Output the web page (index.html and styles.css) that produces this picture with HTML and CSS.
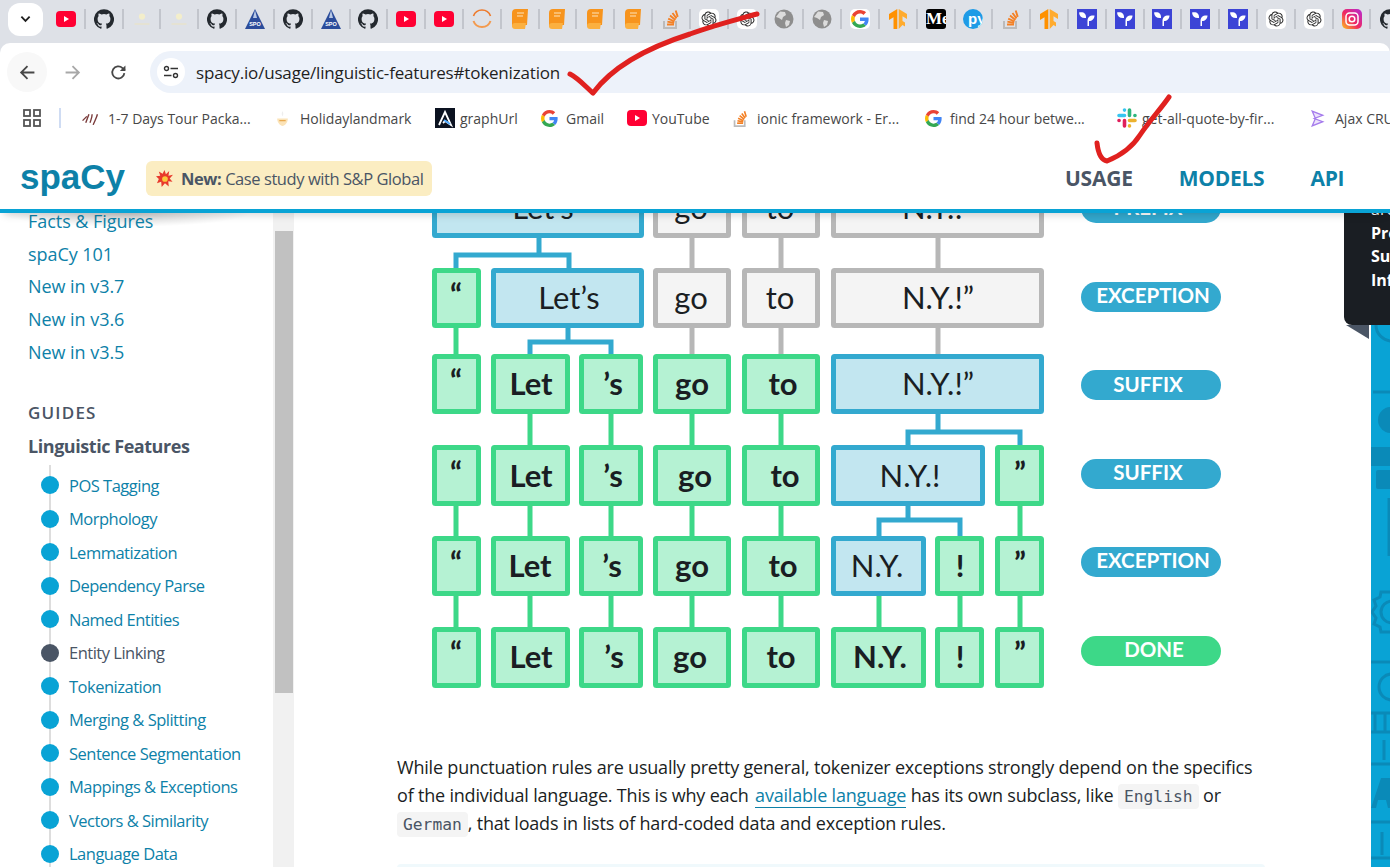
FILE: index.html
```html
<!DOCTYPE html>
<html lang="en">
<head>
    <meta charset="UTF-8">
    <meta name="viewport" content="width=device-width, initial-scale=1.0">
    <title>Linguistic Features - spaCy</title>
    <link rel="stylesheet" href="styles.css">
</head>
<body>
    <!-- icon sprite -->
    <svg class="sprite" aria-hidden="true">
        <defs>
            <linearGradient id="ig-grad" x1="0" y1="1" x2="1" y2="0">
                <stop offset="0" stop-color="#fdc21c"/>
                <stop offset=".45" stop-color="#f0285f"/>
                <stop offset="1" stop-color="#b52bd6"/>
            </linearGradient>
        </defs>
        <symbol id="yt" viewBox="0 0 20 16"><rect width="20" height="16" rx="4" fill="#ff0033"/><path d="M8 5l5 3-5 3z" fill="#fff"/></symbol>
        <symbol id="gh" viewBox="0 0 24 24"><path fill="#24292f" d="M12 .3a12 12 0 0 0-3.8 23.4c.6.1.8-.3.8-.6v-2c-3.3.7-4-1.6-4-1.6-.6-1.4-1.4-1.8-1.4-1.8-1-.7.1-.7.1-.7 1.2.1 1.8 1.2 1.8 1.2 1 1.8 2.8 1.3 3.5 1 .1-.8.4-1.3.8-1.6-2.7-.3-5.5-1.3-5.5-6 0-1.2.5-2.3 1.3-3.1-.2-.4-.6-1.6 0-3.2 0 0 1-.3 3.4 1.2a11.5 11.5 0 0 1 6 0c2.3-1.5 3.3-1.2 3.3-1.2.6 1.6.2 2.8.1 3.2.8.8 1.3 1.9 1.3 3.1 0 4.7-2.8 5.7-5.5 6 .4.4.8 1.1.8 2.2v3.3c0 .3.2.7.8.6A12 12 0 0 0 12 .3z"/></symbol>
        <symbol id="dim" viewBox="0 0 16 16"><circle cx="8" cy="6" r="2.5" fill="#f3eecb"/><path d="M2 12h12" stroke="#e6e3d2" stroke-width="1.5"/></symbol>
        <symbol id="spo" viewBox="0 0 20 20"><path d="M10 0L20 20H0z" fill="#2b4c9b"/><path d="M10 1L12 9H8z" fill="#b9c9e6"/></symbol>
        <symbol id="ring" viewBox="0 0 20 20"><path d="M1.5 7a9 9 0 0 1 17 0" fill="none" stroke="#ee7a2c" stroke-width="1.6"/><path d="M1.5 12a9 9 0 0 0 17 0" fill="none" stroke="#f39a4e" stroke-width="2"/></symbol>
        <symbol id="book" viewBox="0 0 16 20"><path d="M4 0h12l-1 16H3a3 3 0 0 0-3 2V4a4 4 0 0 1 4-4z" fill="#f7941d"/><path d="M0 17a3 3 0 0 1 3-3h11l-1 6H3a3 3 0 0 1-3-3z" fill="#fbb040"/><path d="M5 4h7M5 7h6" stroke="#fde3bb" stroke-width="1.2"/></symbol>
        <symbol id="stack" viewBox="0 0 16 20"><path d="M1 12v7h12v-7" fill="none" stroke="#bcbbbb" stroke-width="2"/><path d="M4 15.5h7" stroke="#f48024" stroke-width="2"/><path d="M4.4 12.6l6.8 1.4M5.2 9.6l6.3 2.9M7 6.6l5.4 4.4M9.5 4l4 5.4M12.7 1.5l2 6.4" stroke="#f48024" stroke-width="1.9" fill="none"/></symbol>
        <symbol id="gpt" viewBox="-4 -4 32 32"><rect x="-4" y="-4" width="32" height="32" rx="8" fill="#fff"/><path fill="#2a2a2a" d="M22.2819 9.8211a5.9847 5.9847 0 0 0-.5157-4.9108 6.0462 6.0462 0 0 0-6.5098-2.9A6.0651 6.0651 0 0 0 4.9807 4.1818a5.9847 5.9847 0 0 0-3.9977 2.9 6.0462 6.0462 0 0 0 .7427 7.0966 5.98 5.98 0 0 0 .511 4.9107 6.051 6.051 0 0 0 6.5146 2.9001A5.9847 5.9847 0 0 0 13.2599 24a6.0557 6.0557 0 0 0 5.7718-4.2058 5.9894 5.9894 0 0 0 3.9977-2.9001 6.0557 6.0557 0 0 0-.7475-7.0729zm-9.022 12.6081a4.4755 4.4755 0 0 1-2.8764-1.0408l.1419-.0804 4.7783-2.7582a.7948.7948 0 0 0 .3927-.6813v-6.7369l2.02 1.1686a.071.071 0 0 1 .038.052v5.5826a4.504 4.504 0 0 1-4.4945 4.4944zm-9.6607-4.1254a4.4708 4.4708 0 0 1-.5346-3.0137l.142.0852 4.783 2.7582a.7712.7712 0 0 0 .7806 0l5.8428-3.3685v2.3324a.0804.0804 0 0 1-.0332.0615L9.74 19.9502a4.4992 4.4992 0 0 1-6.1408-1.6464zM2.3408 7.8956a4.485 4.485 0 0 1 2.3655-1.9728V11.6a.7664.7664 0 0 0 .3879.6765l5.8144 3.3543-2.0201 1.1685a.0757.0757 0 0 1-.071 0l-4.8303-2.7865A4.504 4.504 0 0 1 2.3408 7.872zm16.5963 3.8558L13.1038 8.364 15.1192 7.2a.0757.0757 0 0 1 .071 0l4.8303 2.7913a4.4944 4.4944 0 0 1-.6765 8.1042v-5.6772a.79.79 0 0 0-.407-.667zm2.0107-3.0231l-.142-.0852-4.7735-2.7818a.7759.7759 0 0 0-.7854 0L9.409 9.2297V6.8974a.0662.0662 0 0 1 .0284-.0615l4.8303-2.7866a4.4992 4.4992 0 0 1 6.6802 4.66zM8.3065 12.863l-2.02-1.1638a.0804.0804 0 0 1-.038-.0567V6.0742a4.4992 4.4992 0 0 1 7.3757-3.4537l-.142.0805L8.704 5.459a.7948.7948 0 0 0-.3927.6813zm1.0976-2.3654l2.602-1.4998 2.6069 1.4998v2.9994l-2.5974 1.4997-2.6067-1.4997Z"/></symbol>
        <symbol id="globe" viewBox="0 0 20 20"><circle cx="10" cy="10" r="9.5" fill="#8e8e8e"/><path d="M6 2.5l5 .5 1 3-3 2-1 3-3-2-3-1zM12 11l4 1-1 4-3 2-1-4z" fill="#dcdcdc"/></symbol>
        <symbol id="goog" viewBox="0 0 48 48"><path fill="#EA4335" d="M24 9.5c3.54 0 6.71 1.22 9.21 3.6l6.85-6.85C35.9 2.38 30.47 0 24 0 14.62 0 6.51 5.38 2.56 13.22l7.98 6.19C12.43 13.72 17.74 9.5 24 9.5z"/><path fill="#4285F4" d="M46.98 24.55c0-1.57-.15-3.09-.38-4.55H24v9.02h12.94c-.58 2.96-2.26 5.48-4.78 7.18l7.73 6c4.51-4.18 7.09-10.36 7.09-17.65z"/><path fill="#FBBC05" d="M10.53 28.59c-.48-1.45-.76-2.99-.76-4.59s.27-3.14.76-4.59l-7.98-6.19C.92 16.46 0 20.12 0 24c0 3.88.92 7.54 2.56 10.78l7.97-6.19z"/><path fill="#34A853" d="M24 48c6.48 0 11.93-2.13 15.89-5.81l-7.73-6c-2.15 1.45-4.92 2.3-8.16 2.3-6.26 0-11.57-4.22-13.47-9.91l-7.98 6.19C6.51 42.62 14.62 48 24 48z"/></symbol>
        <symbol id="tf" viewBox="0 0 20 20"><path d="M9.300 0L1 5v6l4.500-2.700V20h3.800z" fill="#ff9100"/><path d="M10.700 0L19 5v5l-4.500-2.700V12l2.500 1.500v4l-2.500-1.500-3.800 4z" fill="#ffab2e"/></symbol>
        <symbol id="leaf" viewBox="0 0 20 20"><rect width="20" height="20" fill="#3c44d6"/><path d="M2 3.500C6 2.500 9.500 4 9 9 5 9.500 2.500 7.500 2 3.500zM17.500 6.500C13 6 10.500 8 10.500 12v5H12v-5c3 0 5.500-2 5.500-5.500z" fill="#fff"/></symbol>
        <symbol id="ig" viewBox="0 0 20 20"><rect width="20" height="20" rx="5" fill="url(#ig-grad)"/><rect x="4" y="4" width="12" height="12" rx="3.500" fill="none" stroke="#fff" stroke-width="1.500"/><circle cx="10" cy="10" r="2.800" fill="none" stroke="#fff" stroke-width="1.500"/></symbol>
    </svg>

    <div class="browser">
        <div class="tabstrip">
            <button class="tab-menu"><svg viewBox="0 0 12 8" class="chevron"><path d="M1.500 1.500L6 6l4.500-4.500" fill="none" stroke="#1f1f1f" stroke-width="2"/></svg></button>
            <div class="tab"><svg class="fav"><use href="#yt"/></svg></div>
            <div class="tab"><svg class="fav"><use href="#gh"/></svg></div>
            <div class="tab"><svg class="fav"><use href="#dim"/></svg></div>
            <div class="tab"><svg class="fav"><use href="#dim"/></svg></div>
            <div class="tab"><svg class="fav"><use href="#gh"/></svg></div>
            <div class="tab"><svg class="fav" viewBox="0 0 20 20"><use href="#spo" width="20" height="20"/><text x="10" y="16.500" class="spo-text">SPO</text></svg></div>
            <div class="tab"><svg class="fav"><use href="#gh"/></svg></div>
            <div class="tab"><svg class="fav" viewBox="0 0 20 20"><use href="#spo" width="20" height="20"/><text x="10" y="16.500" class="spo-text">SPO</text></svg></div>
            <div class="tab"><svg class="fav"><use href="#gh"/></svg></div>
            <div class="tab"><svg class="fav"><use href="#yt"/></svg></div>
            <div class="tab"><svg class="fav"><use href="#yt"/></svg></div>
            <div class="tab"><svg class="fav"><use href="#ring"/></svg></div>
            <div class="tab"><svg class="fav"><use href="#book"/></svg></div>
            <div class="tab"><svg class="fav"><use href="#book"/></svg></div>
            <div class="tab"><svg class="fav"><use href="#book"/></svg></div>
            <div class="tab"><svg class="fav"><use href="#book"/></svg></div>
            <div class="tab"><svg class="fav"><use href="#stack"/></svg></div>
            <div class="tab"><svg class="fav"><use href="#gpt"/></svg></div>
            <div class="tab"><svg class="fav"><use href="#gpt"/></svg></div>
            <div class="tab"><svg class="fav"><use href="#globe"/></svg></div>
            <div class="tab"><svg class="fav"><use href="#globe"/></svg></div>
            <div class="tab"><svg class="fav fav-white"><use href="#goog"/></svg></div>
            <div class="tab"><svg class="fav"><use href="#tf"/></svg></div>
            <div class="tab"><svg class="fav fav-black" viewBox="0 0 20 20"><text x="0" y="15" class="med-text">Me</text></svg></div>
            <div class="tab"><svg class="fav fav-py" viewBox="0 0 20 20"><text x="5" y="14.500" class="py-text">py</text></svg></div>
            <div class="tab"><svg class="fav"><use href="#stack"/></svg></div>
            <div class="tab"><svg class="fav"><use href="#tf"/></svg></div>
            <div class="tab"><svg class="fav"><use href="#leaf"/></svg></div>
            <div class="tab"><svg class="fav"><use href="#leaf"/></svg></div>
            <div class="tab"><svg class="fav"><use href="#leaf"/></svg></div>
            <div class="tab"><svg class="fav"><use href="#leaf"/></svg></div>
            <div class="tab"><svg class="fav"><use href="#leaf"/></svg></div>
            <div class="tab"><svg class="fav"><use href="#gpt"/></svg></div>
            <div class="tab"><svg class="fav"><use href="#gpt"/></svg></div>
            <div class="tab"><svg class="fav"><use href="#ig"/></svg></div>
            <div class="tab"><svg class="fav"><use href="#gh"/></svg></div>
        </div>

        <div class="toolbar">
            <button class="tool tool-back"><svg viewBox="0 0 16 16"><path d="M14.500 8H2M8 2L2 8l6 6" fill="none" stroke="#474747" stroke-width="1.700"/></svg></button>
            <button class="tool tool-forward"><svg viewBox="0 0 16 16"><path d="M1.500 8H14M8 2l6 6-6 6" fill="none" stroke="#a8a8a8" stroke-width="1.700"/></svg></button>
            <button class="tool tool-reload"><svg viewBox="0 0 16 16"><path d="M13.500 8.500A5.700 5.700 0 1 1 11.800 3.800L14 6" fill="none" stroke="#474747" stroke-width="1.700"/><path d="M14.500 1.500v5.200H9.300z" fill="#474747"/></svg></button>
            <div class="omnibox">
                <span class="site-info"><svg viewBox="0 0 16 14"><circle cx="3.500" cy="3.500" r="2" fill="none" stroke="#333" stroke-width="1.400"/><path d="M7.500 3.500H15M1 10.500h7.500" stroke="#333" stroke-width="1.400"/><circle cx="12.500" cy="10.500" r="2" fill="none" stroke="#333" stroke-width="1.400"/></svg></span>
                <span class="url">spacy.io/usage/linguistic-features#tokenization</span>
            </div>
        </div>

        <div class="bookmarks">
            <span class="apps"><svg viewBox="0 0 18 18"><g fill="none" stroke="#555" stroke-width="1.800"><rect x="1" y="1" width="6" height="6"/><rect x="11" y="1" width="6" height="6"/><rect x="1" y="11" width="6" height="6"/><rect x="11" y="11" width="6" height="6"/></g></svg></span>
            <span class="bm-sep"></span>
            <div class="bm-list">
                <a class="bm"><svg class="bm-ico bm-ico-wide" viewBox="0 0 16 16"><path d="M1 10l4-4M4 12l3-8M8 12c1-3 2-5 2-8M11 14c1-3 3-6 4-10" stroke="#7a3b3b" stroke-width="1.300" fill="none"/></svg>1-7 Days Tour Packa...</a>
                <a class="bm"><svg class="bm-ico bm-ico-mid" viewBox="0 0 16 16"><path d="M8 1c1 2 1 3 0 5-1-2-1-3 0-5z" fill="#eee"/><path d="M3 8h10c0 4-3 7-5 7s-5-3-5-7z" fill="#fbe3b8"/><path d="M5 10h6" stroke="#e9a94f" stroke-width="1.200"/></svg>Holidaylandmark</a>
                <a class="bm"><svg class="bm-ico bm-ico-lg" viewBox="0 0 20 20"><rect width="20" height="20" fill="#0b1220"/><path d="M4 17l6-13 6 13-6-4-2 2" fill="none" stroke="#fff" stroke-width="1.800"/><path d="M9 12l6 4" stroke="#4aa8ff" stroke-width="1.800"/></svg>graphUrl</a>
                <a class="bm"><svg class="bm-ico"><use href="#goog"/></svg>Gmail</a>
                <a class="bm"><svg class="bm-ico bm-ico-lg"><use href="#yt"/></svg>YouTube</a>
                <a class="bm"><svg class="bm-ico"><use href="#stack"/></svg>ionic framework - Er...</a>
                <a class="bm"><svg class="bm-ico"><use href="#goog"/></svg>find 24 hour betwe...</a>
                <a class="bm"><svg class="bm-ico bm-ico-lg" viewBox="0 0 20 20"><g fill="none" stroke-width="3.600" stroke-linecap="round"><path d="M7.500 2v.1M2 7.500h5.500" stroke="#36c5f0"/><path d="M12.500 2v5.500M18 7.500h-.1" stroke="#2eb67d"/><path d="M12.500 18v-.1M18 12.500h-5.500" stroke="#ecb22e"/><path d="M7.500 18v-5.500M2 12.500h.1" stroke="#e01e5a"/></g></svg>get-all-quote-by-fir...</a>
                <a class="bm"><svg class="bm-ico bm-ico-mid" viewBox="0 0 16 16"><path d="M3 1l10 4-8 3 8 3-10 4 3-7z" fill="#ece2fb" stroke="#a57bec" stroke-width="1.200"/></svg>Ajax CRUD</a>
            </div>
        </div>
    </div>

    <header class="site-header">
        <a class="logo">spaCy</a>
        <a class="news"><svg class="news-ico" viewBox="0 0 18 18"><path d="M9 0l1.500 4.500L14 1l-.8 5L18 5l-3.500 4 3 3.500-4.500-.5.500 5.500-4-3.500L6 18l-.5-5.500L1 14l2-4.500L0 6.500l4.500-.5L3 1.500l4 2.500z" fill="#e8392c"/><circle cx="9.500" cy="9.500" r="3" fill="#fcc83c"/></svg><strong>New:</strong> Case study with S&amp;P Global</a>
        <nav class="topnav">
            <a class="topnav-current">USAGE</a>
            <a>MODELS</a>
            <a>API</a>
            <a>UNIVERSE</a>
        </nav>
    </header>

    <div class="content">
        <aside class="sidebar">
            <ul class="side-top">
                <li>Facts &amp; Figures</li>
                <li>spaCy 101</li>
                <li>New in v3.7</li>
                <li>New in v3.6</li>
                <li>New in v3.5</li>
            </ul>
            <h3 class="side-title">GUIDES</h3>
            <h4 class="side-heading">Linguistic Features</h4>
            <ul class="side-sub">
                <li>POS Tagging</li>
                <li>Morphology</li>
                <li>Lemmatization</li>
                <li>Dependency Parse</li>
                <li>Named Entities</li>
                <li class="current">Entity Linking</li>
                <li>Tokenization</li>
                <li>Merging &amp; Splitting</li>
                <li>Sentence Segmentation</li>
                <li>Mappings &amp; Exceptions</li>
                <li>Vectors &amp; Similarity</li>
                <li>Language Data</li>
            </ul>
        </aside>
        <div class="side-scroll"><div class="side-thumb"></div></div>

        <main class="main">
            <!-- tokenizer diagram, drawn in page coordinates -->
            <svg class="diagram" viewBox="294 213 1077 540">
                <g class="line-blue">
                    <path d="M539 238V255M456 268V255H569V268"/>
                    <path d="M568 328V342M530 354V342H611V354"/>
                    <path d="M938 414V432M908 445V432H1020V445"/>
                    <path d="M908 506V520M879 536V520H960V536"/>
                </g>
                <g class="line-gray">
                    <path d="M692 238V268M781 238V268M938 238V268"/>
                    <path d="M692 328V354M781 328V354M938 328V354"/>
                </g>
                <g class="line-green">
                    <path d="M456 328V354"/>
                    <path d="M530 414V445M611 414V445M692 414V445M781 414V445"/>
                    <path d="M456 506V536M530 506V536M611 506V536M692 506V536M781 506V536M1020 506V536"/>
                    <path d="M456 596V627M530 596V627M611 596V627M692 596V627M781 596V627M879 596V627M960 596V627M1020 596V627"/>
                </g>

                <g class="box-blue"><rect x="434.500" y="180.500" width="207" height="55"/></g>
                <g class="box-gray">
                    <rect x="655.500" y="180.500" width="73" height="55"/>
                    <rect x="744.500" y="180.500" width="73" height="55"/>
                    <rect x="833.500" y="180.500" width="208" height="55"/>
                </g>
                <text class="tok" x="543" y="219">Let’s</text>
                <text class="tok" x="691" y="219">go</text>
                <text class="tok" x="780" y="219">to</text>
                <text class="tok" x="938" y="219">N.Y.!”</text>

                <g class="box-green"><rect x="434.500" y="270.500" width="44" height="55"/></g>
                <g class="box-blue"><rect x="493.500" y="270.500" width="148" height="55"/></g>
                <g class="box-gray">
                    <rect x="655.500" y="270.500" width="73" height="55"/>
                    <rect x="744.500" y="270.500" width="73" height="55"/>
                    <rect x="833.500" y="270.500" width="208" height="55"/>
                </g>
                <text class="tok-b" x="456" y="306">“</text>
                <text class="tok" x="569" y="309">Let’s</text>
                <text class="tok" x="691" y="309">go</text>
                <text class="tok" x="780" y="309">to</text>
                <text class="tok" x="938" y="309">N.Y.!”</text>

                <g class="box-green">
                    <rect x="434.500" y="356.500" width="44" height="55"/>
                    <rect x="493.500" y="356.500" width="74" height="55"/>
                    <rect x="581.500" y="356.500" width="59" height="55"/>
                    <rect x="655.500" y="356.500" width="73" height="55"/>
                    <rect x="744.500" y="356.500" width="73" height="55"/>
                </g>
                <g class="box-blue"><rect x="833.500" y="356.500" width="208" height="55"/></g>
                <text class="tok-b" x="456" y="392">“</text>
                <text class="tok-b" x="531" y="395">Let</text>
                <text class="tok-b" x="613" y="395">’s</text>
                <text class="tok-b" x="692" y="395">go</text>
                <text class="tok-b" x="783" y="395">to</text>
                <text class="tok" x="938" y="395">N.Y.!”</text>

                <g class="box-green">
                    <rect x="434.500" y="447.500" width="44" height="56"/>
                    <rect x="493.500" y="447.500" width="74" height="56"/>
                    <rect x="581.500" y="447.500" width="59" height="56"/>
                    <rect x="655.500" y="447.500" width="73" height="56"/>
                    <rect x="744.500" y="447.500" width="73" height="56"/>
                    <rect x="997.500" y="447.500" width="44" height="56"/>
                </g>
                <g class="box-blue"><rect x="833.500" y="447.500" width="149" height="56"/></g>
                <text class="tok-b" x="456" y="484">“</text>
                <text class="tok-b" x="531" y="487">Let</text>
                <text class="tok-b" x="613" y="487">’s</text>
                <text class="tok-b" x="695" y="487">go</text>
                <text class="tok-b" x="785" y="487">to</text>
                <text class="tok" x="910" y="487">N.Y.!</text>
                <text class="tok-b" x="1020" y="484">”</text>

                <g class="box-green">
                    <rect x="434.500" y="538.500" width="44" height="55"/>
                    <rect x="493.500" y="538.500" width="74" height="55"/>
                    <rect x="581.500" y="538.500" width="59" height="55"/>
                    <rect x="655.500" y="538.500" width="73" height="55"/>
                    <rect x="744.500" y="538.500" width="73" height="55"/>
                    <rect x="937.500" y="538.500" width="44" height="55"/>
                    <rect x="997.500" y="538.500" width="44" height="55"/>
                </g>
                <g class="box-blue"><rect x="833.500" y="538.500" width="90" height="55"/></g>
                <text class="tok-b" x="456" y="574">“</text>
                <text class="tok-b" x="530" y="577">Let</text>
                <text class="tok-b" x="612" y="577">’s</text>
                <text class="tok-b" x="692" y="577">go</text>
                <text class="tok-b" x="783" y="577">to</text>
                <text class="tok" x="877" y="577">N.Y.</text>
                <text class="tok-b" x="960" y="577">!</text>
                <text class="tok-b" x="1020" y="574">”</text>

                <g class="box-green">
                    <rect x="434.500" y="629.500" width="44" height="56"/>
                    <rect x="493.500" y="629.500" width="74" height="56"/>
                    <rect x="581.500" y="629.500" width="59" height="56"/>
                    <rect x="655.500" y="629.500" width="73" height="56"/>
                    <rect x="744.500" y="629.500" width="73" height="56"/>
                    <rect x="833.500" y="629.500" width="90" height="56"/>
                    <rect x="937.500" y="629.500" width="44" height="56"/>
                    <rect x="997.500" y="629.500" width="44" height="56"/>
                </g>
                <text class="tok-b" x="456" y="664">“</text>
                <text class="tok-b" x="531" y="668">Let</text>
                <text class="tok-b" x="614" y="668">’s</text>
                <text class="tok-b" x="690" y="668">go</text>
                <text class="tok-b" x="781" y="668">to</text>
                <text class="tok-b" x="880" y="668">N.Y.</text>
                <text class="tok-b" x="960" y="668">!</text>
                <text class="tok-b" x="1020" y="664">”</text>

                <rect class="pill" x="1081" y="193" width="140" height="30" rx="15"/>
                <text class="pill-text" x="1148" y="215">PREFIX</text>
                <rect class="pill" x="1081" y="282" width="140" height="30" rx="15"/>
                <text class="pill-text" x="1153" y="303">EXCEPTION</text>
                <rect class="pill" x="1081" y="370" width="140" height="30" rx="15"/>
                <text class="pill-text" x="1148" y="392">SUFFIX</text>
                <rect class="pill" x="1081" y="459" width="140" height="30" rx="15"/>
                <text class="pill-text" x="1148" y="480">SUFFIX</text>
                <rect class="pill" x="1081" y="547" width="140" height="30" rx="15"/>
                <text class="pill-text" x="1153" y="568">EXCEPTION</text>
                <rect class="pill pill-done" x="1081" y="636" width="140" height="30" rx="15"/>
                <text class="pill-text" x="1154" y="657">DONE</text>
            </svg>

            <p class="para">While punctuation rules are usually pretty general, tokenizer exceptions strongly depend on the specifics<br>
            of the individual language. This is why each <a class="link">available language</a> has its own subclass, like <code>English</code> or<br>
            <code>German</code>, that loads in lists of hard-coded data and exception rules.</p>
            <div class="infobox"></div>
        </main>

        <div class="rail">
            <svg class="rail-art" viewBox="1371 213 19 654">
                <g fill="none" stroke="#0a8ab8" stroke-width="3">
                    <circle cx="1392" cy="325" r="16"/>
                    <path d="M1373 392H1390"/>
                    <path d="M1389 498V556"/>
                    <path d="M1390 592h-9l-1 5-6 3 2 6-4 6 4 6-2 6 6 3 1 5h9"/>
                    <circle cx="1392" cy="612" r="11"/>
                    <path d="M1371 662H1390"/>
                    <circle cx="1392" cy="687" r="13"/>
                    <path d="M1371 713H1390M1371 732H1390M1375 713V732M1385 713V732"/>
                    <path d="M1384 740V760M1371 764H1390"/>
                    <path d="M1371 822H1390M1382 832V855M1371 858H1390"/>
                </g>
                <g fill="#0a8ab8">
                    <circle cx="1391" cy="420" r="13"/>
                    <path d="M1371 447H1390V466H1371z"/>
                    <rect x="1376" y="470" width="16" height="19" rx="2"/>
                    <path d="M1371 808L1381 778H1392V808H1388L1386 800H1378L1376 808z"/>
                </g>
            </svg>
            <div class="toc-panel">
                <p>are</p>
                <p><strong>Prefix</strong></p>
                <p><strong>Suffix</strong></p>
                <p><strong>Infix</strong></p>
            </div>
            <svg class="toc-fold" viewBox="0 0 24 14"><path d="M0 0H23V14z" fill="#4a5565"/></svg>
        </div>
    </div>

    <!-- red pen marks someone drew on the screenshot -->
    <svg class="pen" viewBox="0 0 1390 867">
        <path d="M570 74C578 78 585 86 593 93C610 70 640 50 690 34C715 25 735 20 757 14"/>
        <path d="M1097 143C1098 152 1101 160 1107 161C1122 155 1133 146 1140 135C1150 120 1160 110 1169 97"/>
    </svg>
</body>
</html>
```

FILE: styles.css
```css
* {
    margin: 0;
    padding: 0;
    box-sizing: border-box;
}
html, body {
    height: 100%;
}
body {
    font-family: "Open Sans", sans-serif;
    background: #fff;
    color: #1a1e23;
    overflow: hidden;
    display: flex;
    flex-direction: column;
    height: 867px;
    position: relative;
}
ul {
    list-style: none;
}
button {
    border: none;
    background: none;
}
.sprite {
    width: 0;
    height: 0;
    flex: none;
}

/* browser chrome */
.browser {
    flex: none;
    background: #dee1e7;
}
.tabstrip {
    display: flex;
    align-items: center;
    height: 43px;
    padding: 0 0 5px 8px;
    overflow: hidden;
}
.tab-menu {
    width: 35px;
    height: 33px;
    margin-right: 5px;
    background: #fff;
    border-radius: 12px;
    flex: none;
    display: flex;
    align-items: center;
    justify-content: center;
}
.chevron {
    width: 11px;
    height: 8px;
}
.tab {
    flex: none;
    width: 37.82px;
    height: 20px;
    border-right: 2px solid #c2c5cc;
    display: flex;
    align-items: center;
    justify-content: center;
}
.tab:last-child {
    border-right: none;
}
.fav {
    width: 20px;
    height: 20px;
    flex: none;
}
.fav-white {
    background: #fff;
    border-radius: 5px;
    padding: 1px;
}
.fav-black {
    background: #000;
    border-radius: 3px;
}
.fav-py {
    background: #1e9be6;
    border-radius: 50%;
}
.spo-text {
    font-family: "Liberation Sans", sans-serif;
    font-size: 5.500px;
    font-weight: 700;
    fill: #fff;
    text-anchor: middle;
}
.med-text {
    font-family: "Liberation Serif", serif;
    font-size: 17px;
    font-weight: 700;
    fill: #fff;
}
.py-text {
    font-family: "Liberation Sans", sans-serif;
    font-size: 15px;
    font-weight: 700;
    fill: #fff;
}
.toolbar {
    height: 50px;
    background: #fff;
    border-radius: 10px 10px 0 0;
    display: flex;
    padding: 8px 0 0 7px;
}
.tool {
    flex: none;
    width: 40px;
    height: 40px;
    margin-top: 1px;
    display: flex;
    align-items: center;
    justify-content: center;
}
.tool svg {
    width: 17px;
    height: 17px;
}
.tool-back {
    background: #f8f8f8;
    border-radius: 50%;
}
.tool-forward {
    margin-left: 5px;
}
.tool-reload {
    margin-left: 6px;
}
.omnibox {
    flex: 1;
    height: 42px;
    margin-left: 12px;
    background: #edf2fa;
    border-radius: 21px 0 0 21px;
    display: flex;
    align-items: center;
    padding-left: 7px;
}
.site-info {
    width: 28px;
    height: 28px;
    background: #fff;
    border-radius: 50%;
    display: flex;
    align-items: center;
    justify-content: center;
}
.site-info svg {
    width: 16px;
    height: 14px;
}
.url {
    margin-left: 11px;
    font-size: 17px;
    letter-spacing: -.18px;
    color: #1f1f1f;
}
.bookmarks {
    height: 50px;
    background: #fff;
    display: flex;
    align-items: center;
    padding-left: 23px;
    overflow: hidden;
}
.apps {
    display: flex;
    flex: none;
}
.apps svg {
    width: 18px;
    height: 18px;
}
.bm-sep {
    flex: none;
    width: 2px;
    height: 20px;
    margin-left: 18px;
    background: #cfdcf3;
}
.bm-list {
    display: grid;
    grid-template-columns: 193px 162px 106px 86px 105px 193px 192px 191px 120px;
    margin-left: 19px;
    flex: none;
}
.bm {
    display: flex;
    align-items: center;
    gap: 8px;
    font-size: 14px;
    color: #474747;
    white-space: nowrap;
}
.bm-ico {
    width: 17px;
    height: 17px;
    flex: none;
}
.bm-ico-wide {
    width: 20px;
}
.bm-ico-mid {
    width: 19px;
}
.bm-ico-lg {
    width: 20px;
    height: 20px;
    margin-right: -3px;
}

/* site header */
.site-header {
    flex: none;
    height: 70px;
    background: #fff;
    border-bottom: 4px solid #09a3d5;
    box-shadow: 0 6px 8px -4px rgba(0,0,0,0.16);
    display: flex;
    align-items: center;
    padding: 4px 0 0 20px;
    overflow: hidden;
    position: relative;
    z-index: 2;
}
.logo {
    flex: none;
    width: 126px;
    margin-top: -3px;
    font-family: "Liberation Sans", sans-serif;
    font-size: 35px;
    font-weight: 700;
    color: #0d81a8;
}
.news {
    flex: none;
    width: 286px;
    height: 35px;
    background: #fbedc2;
    border-radius: 6px;
    display: flex;
    align-items: center;
    padding-left: 10px;
    font-size: 16.500px;
    letter-spacing: -.43px;
    color: #4a5565;
    white-space: pre;
}
.news-ico {
    width: 17px;
    height: 17px;
    margin-right: 8px;
}
.topnav {
    flex: none;
    margin-left: 633px;
    display: flex;
    gap: 46px;
}
.topnav a {
    font-size: 21px;
    font-weight: 700;
    letter-spacing: -.25px;
    color: #0d81a8;
}
.topnav .topnav-current {
    color: #4a5565;
}

/* page below the header */
.content {
    flex: 1;
    min-height: 0;
    display: flex;
}
.sidebar {
    flex: none;
    width: 273px;
    overflow: hidden;
    padding-left: 28px;
    font-size: 18px;
    letter-spacing: -.05px;
    color: #0d81a8;
    background: radial-gradient(ellipse 125px 14px at 125px 0, rgba(0,0,0,0.2), transparent) no-repeat;
}
.side-top {
    margin-top: -8px;
}
.side-top li {
    height: 32.700px;
    line-height: 32.700px;
}
.side-title {
    margin-top: 29px;
    font-size: 17px;
    font-weight: 600;
    letter-spacing: 1.200px;
    line-height: 32px;
    color: #4a5565;
}
.side-heading {
    font-size: 18px;
    font-weight: 700;
    letter-spacing: -.45px;
    line-height: 34px;
    color: #4a5565;
}
.side-sub {
    margin: 2px 0 0 21px;
    padding-top: 3px;
    border-left: 2px solid #ddd;
    font-size: 16.500px;
    letter-spacing: -.5px;
}
.side-sub li {
    display: flex;
    align-items: center;
    gap: 10px;
    height: 33.500px;
    margin-left: -10px;
    white-space: nowrap;
}
.side-sub li::before {
    content: "";
    width: 18px;
    height: 18px;
    border-radius: 50%;
    background: #09a3d5;
    flex: none;
}
.side-sub .current {
    color: #4a5565;
}
.side-sub .current::before {
    background: #4a5565;
}
.side-scroll {
    flex: none;
    width: 21px;
    background: #f1f1f1;
    padding: 18px 1px 0 2px;
}
.side-thumb {
    height: 462px;
    background: #c1c1c1;
}
.main {
    flex: none;
    width: 1077px;
    overflow: hidden;
}
.diagram {
    display: block;
    width: 1077px;
    height: 540px;
}
.line-blue, .line-gray, .line-green {
    fill: none;
    stroke-width: 5;
}
.line-blue {
    stroke: #33a9cf;
}
.line-gray {
    stroke: #b7b7b7;
}
.line-green {
    stroke: #3dd888;
}
.box-blue rect, .box-gray rect, .box-green rect {
    stroke-width: 5;
    rx: 1px;
}
.box-blue rect {
    fill: #c2e6f0;
    stroke: #33a9cf;
}
.box-gray rect {
    fill: #f4f4f4;
    stroke: #b7b7b7;
}
.box-green rect {
    fill: #b5f2d3;
    stroke: #3dd888;
}
.tok, .tok-b {
    font-family: Lato, sans-serif;
    font-size: 31px;
    fill: #1a1e23;
    text-anchor: middle;
}
.tok-b {
    font-weight: 700;
}
.pill {
    fill: #33a9cf;
}
.pill-done {
    fill: #3dd888;
}
.pill-text {
    font-family: Lato, sans-serif;
    font-size: 20.500px;
    font-weight: 700;
    fill: #fff;
    text-anchor: middle;
}
.para {
    margin-left: 103px;
    font-size: 18px;
    letter-spacing: -.2px;
    line-height: 28px;
    white-space: nowrap;
}
.link {
    margin-left: 2px;
    color: #0d81a8;
    border-bottom: 1.500px solid #0d81a8;
}
code {
    display: inline-block;
    font-family: "DejaVu Sans Mono", monospace;
    font-size: 16.300px;
    letter-spacing: 0;
    line-height: 25px;
    padding: 0 6px;
    border-radius: 4px;
    background: #f4f4f4;
    color: #4a5565;
}
.infobox {
    margin: 27px 0 0 103px;
    width: 868px;
    height: 40px;
    background: #f0f9fc;
    border-radius: 4px;
}

/* right hand rail with the blue pattern and the dark contents panel */
.rail {
    flex: none;
    width: 19px;
    background: #09a3d5;
    position: relative;
}
.rail-art {
    display: block;
    width: 19px;
    height: 654px;
}
.toc-panel {
    position: absolute;
    top: 0;
    right: 0;
    width: 46px;
    height: 112px;
    padding: 0 0 0 27px;
    background: #1a1e23;
    border-radius: 0 0 0 8px;
    color: #fff;
    font-size: 16px;
    line-height: 23.500px;
    overflow: hidden;
    white-space: nowrap;
}
.toc-panel p:first-child {
    margin-top: -15px;
}
.toc-fold {
    position: absolute;
    top: 112px;
    right: 20px;
    width: 24px;
    height: 14px;
}

.pen {
    position: absolute;
    top: 0;
    left: 0;
    width: 1390px;
    height: 867px;
    z-index: 5;
    pointer-events: none;
    fill: none;
    stroke: #e0211f;
    stroke-width: 5;
    stroke-linecap: round;
    stroke-linejoin: round;
}
```
